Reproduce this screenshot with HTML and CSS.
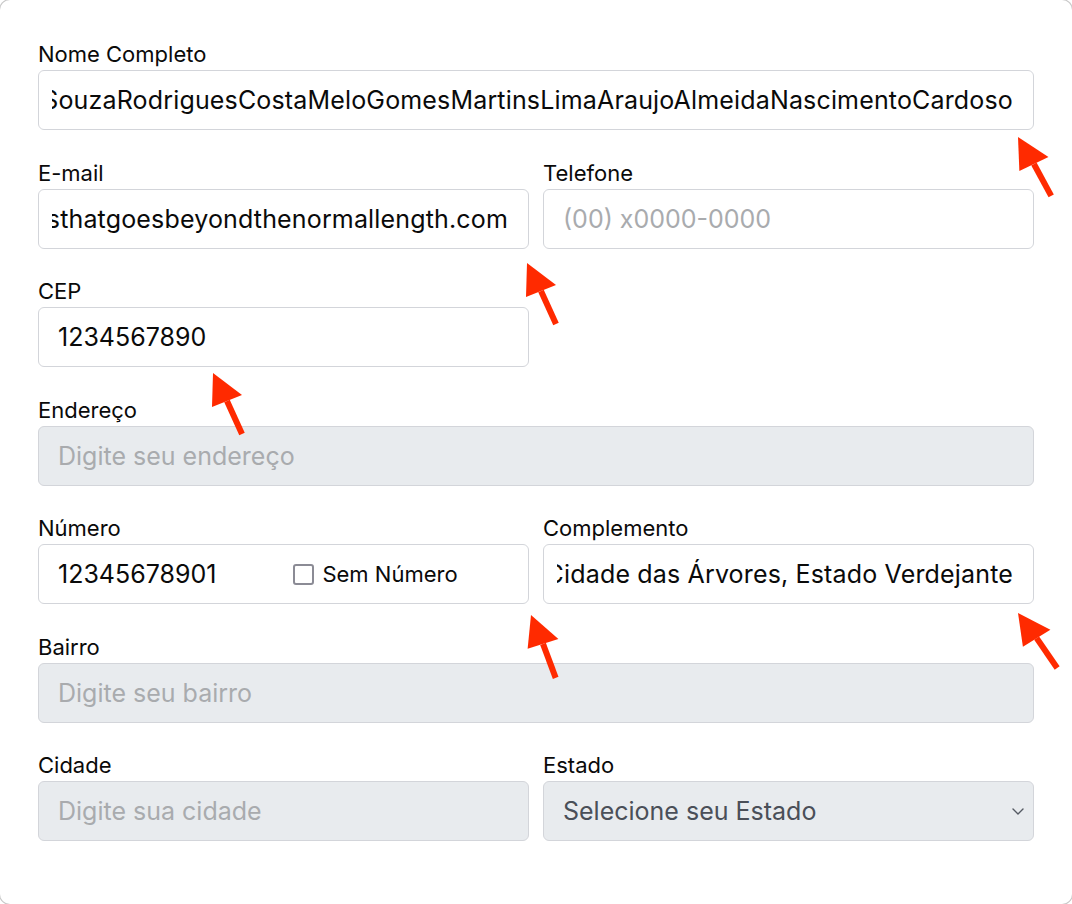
FILE: index.html
```html
<!DOCTYPE html>
<html lang="pt-BR">
<head>
<meta charset="utf-8">
<title>Formulário</title>
<link rel="stylesheet" href="styles.css">
</head>
<body>
<div class="card">
  <form class="form">
    <div class="group full">
      <label class="label">Nome Completo</label>
      <div class="field scroll"><div class="clip"><span class="value">JoãoPedroSilvaSantosOliveiraSouzaRodriguesCostaMeloGomesMartinsLimaAraujoAlmeidaNascimentoCardoso</span></div></div>
    </div>
    <div class="group">
      <label class="label">E-mail</label>
      <div class="field scroll"><div class="clip"><span class="value">usuario@averylongemailaddressthatgoesbeyondthenormallength.com</span></div></div>
    </div>
    <div class="group">
      <label class="label">Telefone</label>
      <div class="field"><span class="placeholder">(00) x0000-0000</span></div>
    </div>
    <div class="group">
      <label class="label">CEP</label>
      <div class="field"><span class="value">1234567890</span></div>
    </div>
    <div class="group empty"></div>
    <div class="group full">
      <label class="label">Endereço</label>
      <div class="field disabled"><span class="placeholder">Digite seu endereço</span></div>
    </div>
    <div class="group">
      <label class="label">Número</label>
      <div class="field"><span class="value num-value">12345678901</span><span class="check"><span class="checkbox"></span><span class="check-label">Sem Número</span></span></div>
    </div>
    <div class="group">
      <label class="label">Complemento</label>
      <div class="field scroll"><div class="clip"><span class="value">Apartamento 101, Bloco B, Rua das Flores, Cidade das Árvores, Estado Verdejante</span></div></div>
    </div>
    <div class="group full">
      <label class="label">Bairro</label>
      <div class="field disabled"><span class="placeholder">Digite seu bairro</span></div>
    </div>
    <div class="group">
      <label class="label">Cidade</label>
      <div class="field disabled"><span class="placeholder">Digite sua cidade</span></div>
    </div>
    <div class="group">
      <label class="label">Estado</label>
      <div class="field disabled select"><span class="select-text">Selecione seu Estado</span>
        <svg class="chevron" width="12" height="7" viewBox="0 0 12 7"><path d="M1 1 L6 6 L11 1" fill="none" stroke="#555a63" stroke-width="1.4" stroke-linecap="round" stroke-linejoin="round"/></svg>
      </div>
    </div>
  </form>

  <svg class="arrow a1" width="40" height="70" viewBox="-5 -2 40 70"><polygon points="0,0 -1,34 29,22" /><line x1="14" y1="28" x2="29" y2="61" /></svg>
  <svg class="arrow a2" width="40" height="70" viewBox="-5 -2 40 70"><polygon points="0,0 -1,34 29,22" /><line x1="14" y1="28" x2="29" y2="61" /></svg>
  <svg class="arrow a3" width="40" height="70" viewBox="-5 -2 40 70"><polygon points="0,0 -1,34 29,22" /><line x1="14" y1="28" x2="29" y2="61" /></svg>
  <svg class="arrow a4" width="40" height="70" viewBox="-5 -2 40 70"><polygon points="0,0 -1,34 29,22" /><line x1="14" y1="28" x2="29" y2="61" /></svg>
  <svg class="arrow a5" width="40" height="70" viewBox="-5 -2 40 70"><polygon points="0,0 -1,34 29,22" /><line x1="14" y1="28" x2="29" y2="61" /></svg>
</div>
</body>
</html>
```

FILE: styles.css
```css
* { box-sizing: border-box; }
html, body {
  margin: 0;
  padding: 0;
  background: #ffffff;
}
body {
  font-family: Inter, "Noto Sans", "Liberation Sans", sans-serif;
  color: #000;
}
.card {
  position: relative;
  width: 1072px;
  height: 904px;
  background: #fff;
  border-radius: 10px;
  box-shadow: 0 0 0 1px #c8c8c8;
  padding: 41px 38px 0 38px;
  overflow: hidden;
}
.form {
  display: grid;
  grid-template-columns: minmax(0, 1fr) minmax(0, 1fr);
  column-gap: 14px;
  row-gap: 29.5px;
  margin: 0;
}
.group { min-width: 0; }
.group.full { grid-column: 1 / span 2; }
.label {
  display: block;
  font-size: 22px;
  line-height: 26px;
  margin-bottom: 3px;
  color: #0a0a0a;
}
.field {
  height: 60px;
  border: 1px solid #d3d5da;
  border-radius: 6px;
  background: #fff;
  padding: 0 19px;
  display: flex;
  align-items: center;
  font-size: 25px;
  white-space: nowrap;
  overflow: hidden;
}
.field.scroll {
  padding-left: 13px;
  padding-right: 20px;
}
.clip {
  flex: 1;
  min-width: 0;
  overflow: hidden;
  display: flex;
  justify-content: flex-end;
}
.clip .value {
  flex-shrink: 0;
  letter-spacing: 0.16px;
}
.value { color: #0a0a0a; }
.placeholder { color: #a9abae; }
.field.disabled {
  background: #e8ebee;
}
.num-value {
  flex: 0 0 auto;
}
.check {
  display: flex;
  align-items: center;
  margin-left: 77px;
}
.checkbox {
  width: 21px;
  height: 21px;
  border: 2px solid #8b8b95;
  border-radius: 3px;
  margin-right: 8px;
  flex-shrink: 0;
}
.check-label {
  font-size: 22px;
  color: #0a0a0a;
}
.select { justify-content: space-between; padding-right: 9px; }
.select-text { color: #4a4f58; }
.chevron { display: block; flex-shrink: 0; }
.arrow {
  position: absolute;
  overflow: visible;
}
.arrow polygon { fill: #ff2a00; }
.arrow line { stroke: #ff2a00; stroke-width: 6; }
.a1 { left: 1013px; top: 135px; transform-origin: 5px 2px; transform: rotate(-4deg); }
.a2 { left: 522px; top: 261px; }
.a3 { left: 208px; top: 371px; }
.a4 { left: 526px; top: 613px; transform-origin: 5px 2px; transform: rotate(4deg); }
.a5 { left: 1013px; top: 611px; transform-origin: 5px 2px; transform: rotate(-10deg); }
```
